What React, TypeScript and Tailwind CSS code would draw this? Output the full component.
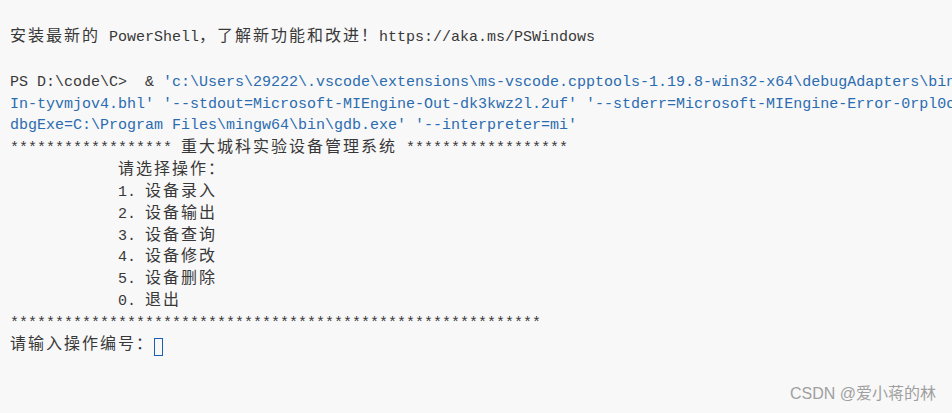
import React from 'react';

// CJK 글자는 터미널처럼 두 칸(18px) 폭으로 맞춘다
const CJK = /([\u3000-\u303f\u4e00-\u9fff\uff00-\uffef]+)/;

function T({ text }: { text: string }) {
  const parts = text.split(CJK);
  return (
    <>
      {parts.map((p, i) =>
        i % 2 === 1 ? (
          <span key={i} className="text-[16px] tracking-[2px]">{p}</span>
        ) : (
          <span key={i}>{p}</span>
        )
      )}
    </>
  );
}

const menu = ['1. 设备录入', '2. 设备输出', '3. 设备查询', '4. 设备修改', '5. 设备删除', '0. 退出'];
const indent = '            ';

export default function App() {
  return (
    <div className="w-[952px] h-[413px] overflow-hidden bg-[#f8f8f8] text-[#383838] flex flex-col">
      <div
        className="flex-1 pl-[10px] pt-[27px] text-[15px] leading-[21.83px] whitespace-pre"
        style={{ fontFamily: '"Liberation Mono", "Noto Sans CJK SC", monospace' }}
      >
        <div className="overflow-hidden"><T text="安装最新的 PowerShell，了解新功能和改进！https://aka.ms/PSWindows" /></div>
        <div className="h-[23px]" />
        <div className="overflow-hidden">
          PS D:\code\C&gt;  &amp; <span className="text-[#2b6cb0]">'c:\Users\29222\.vscode\extensions\ms-vscode.cpptools-1.19.8-win32-x64\debugAdapters\bin\WindowsDebugLauncher.exe'</span>
        </div>
        <div className="overflow-hidden text-[#2b6cb0]">In-tyvmjov4.bhl' '--stdout=Microsoft-MIEngine-Out-dk3kwz2l.2uf' '--stderr=Microsoft-MIEngine-Error-0rpl0cb4.qfa' '--pid=Microsoft</div>
        <div className="overflow-hidden text-[#2b6cb0]">dbgExe=C:\Program Files\mingw64\bin\gdb.exe' '--interpreter=mi'</div>
        <div className="mt-[1px]"><T text="****************** 重大城科实验设备管理系统 ******************" /></div>
        <div><T text={indent + '请选择操作：'} /></div>
        {menu.map((m) => (
          <div key={m}><T text={indent + m} /></div>
        ))}
        <div>{'*'.repeat(59)}</div>
        <div className="flex items-center">
          <T text="请输入操作编号：" />
          <span className="inline-block w-[9px] h-[18px] border-[1.5px] border-[#1a5fb4] mt-[2px]" />
        </div>
      </div>
      <div
        className="self-end pr-[16px] pb-[9px] text-[16px] leading-[20px] text-[#a0a0a0]"
        style={{ fontFamily: '"Liberation Sans", "Noto Sans CJK SC", sans-serif' }}
      >
        CSDN @爱小蒋的林
      </div>
    </div>
  );
}
